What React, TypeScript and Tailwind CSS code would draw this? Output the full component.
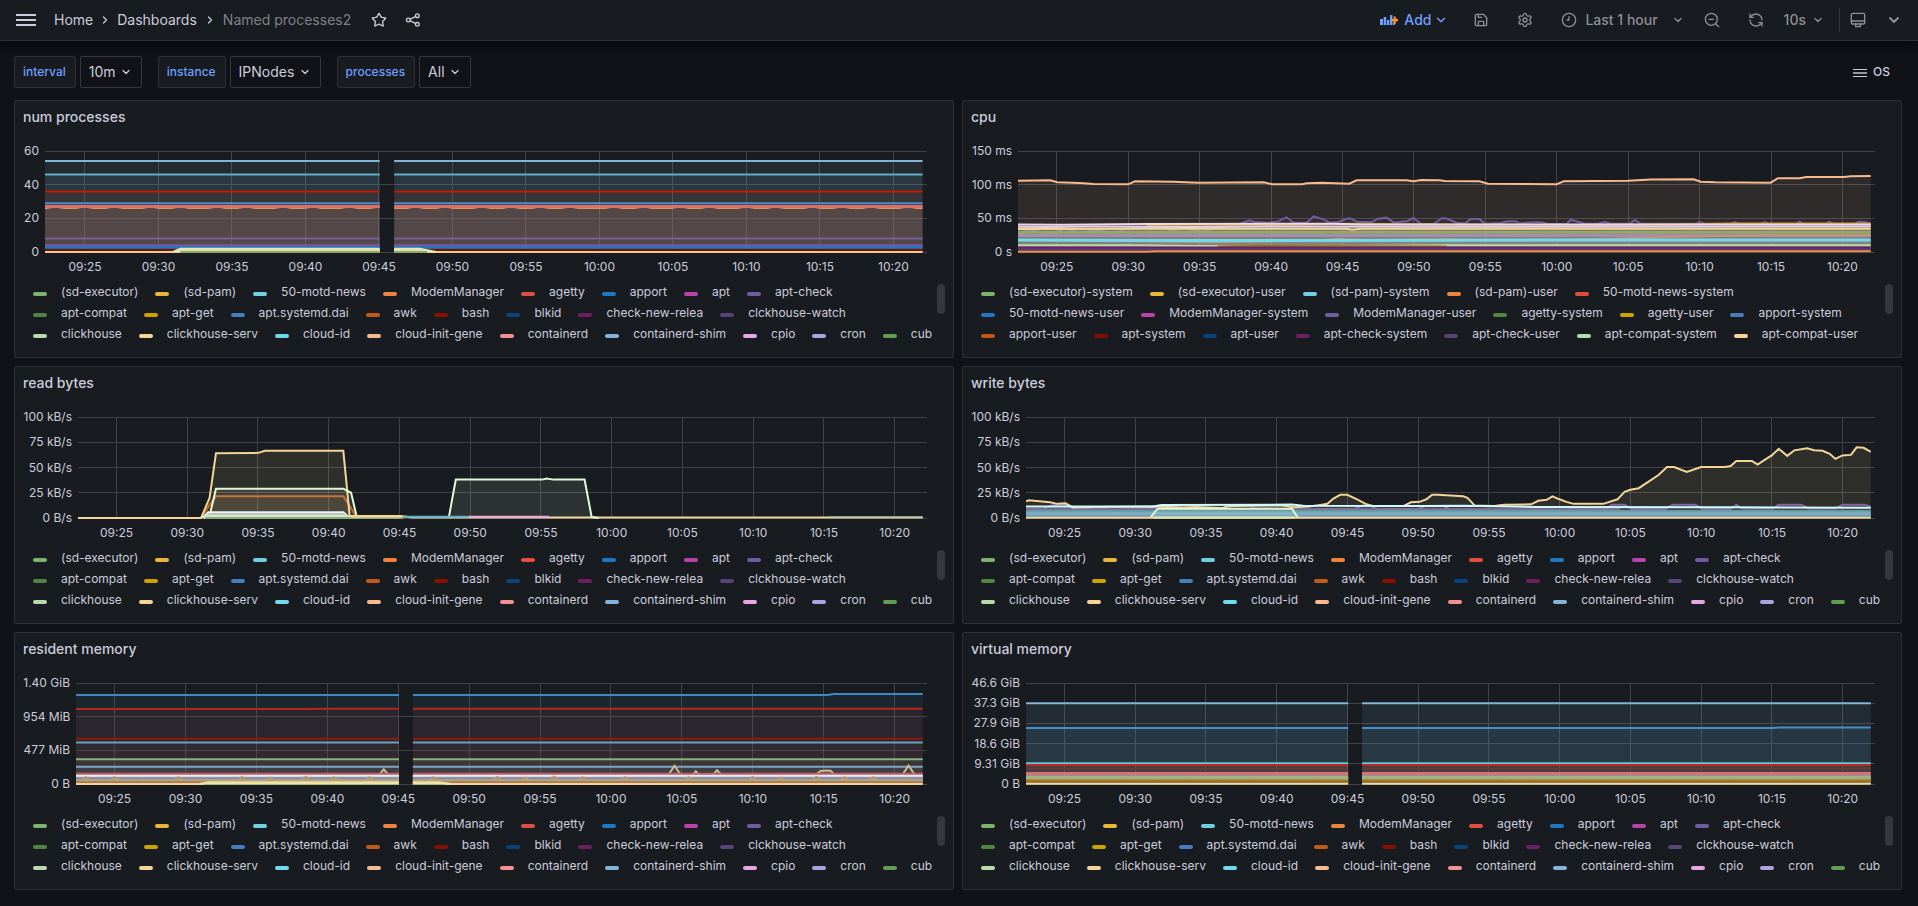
import React, { useId } from 'react';
import { ChevronDown, ChevronRight, RefreshCcw, Settings, Star } from 'lucide-react';

type Point = [number, number];

interface Series {
  color: string;
  points: Point[];
  fill?: number;
  width?: number;
}

interface PanelProps {
  title: string;
  axis: string[];
  axisWidth: string;
  max: number;
  series: Series[];
  legend: string[];
  gap?: boolean;
}

const palette = [
  '#7eb26d', '#eab839', '#6ed0e0', '#ef843c', '#e24d42', '#1f78c1', '#ba43a9', '#705da0',
  '#508642', '#cca300', '#447ebc', '#c15c17', '#890f02', '#0a437c', '#6d1f62', '#584477',
  '#b7dbab', '#f4d598', '#70dbed', '#f9ba8f', '#f29191', '#82b5d8', '#e5a8e2', '#aea2e0', '#629e51',
];

const processNames = [
  '(sd-executor)', '(sd-pam)', '50-motd-news', 'ModemManager', 'agetty', 'apport', 'apt', 'apt-check',
  'apt-compat', 'apt-get', 'apt.systemd.dai', 'awk', 'bash', 'blkid', 'check-new-relea', 'clckhouse-watch',
  'clickhouse', 'clickhouse-serv', 'cloud-id', 'cloud-init-gene', 'containerd', 'containerd-shim', 'cpio', 'cron', 'cub',
];

const cpuNames = [
  '(sd-executor)-system', '(sd-executor)-user', '(sd-pam)-system', '(sd-pam)-user', '50-motd-news-system',
  '50-motd-news-user', 'ModemManager-system', 'ModemManager-user', 'agetty-system', 'agetty-user', 'apport-system',
  'apport-user', 'apt-system', 'apt-user', 'apt-check-system', 'apt-check-user', 'apt-compat-system', 'apt-compat-user',
];

// x values are minutes from the left edge, the window is one hour
const SPAN = 60;
const LAST = 59.7;
const GAP_START = 22.77;
const GAP_END = 23.75;
const ticks = [
  '09:25', '09:30', '09:35', '09:40', '09:45', '09:50', '09:55', '10:00', '10:05', '10:10', '10:15', '10:20',
].map((label, i) => ({ label, x: `${((2.72 + i * 5) / SPAN) * 100}%` }));

const bumpTimes = [
  0.7, 2.7, 4.7, 7.2, 9.2, 11.7, 13.7, 16.2, 18.2, 20.7, 22.7, 25.2, 27.2, 29.7,
  31.7, 33.7, 35.7, 38.7, 40.7, 43.2, 45.2, 47.7, 49.7, 52.2, 54.2, 56.2, 58.7,
];

const flat = (color: string, value: number, fill = 0.1, width = 2, from = 0, to = LAST): Series => ({
  color,
  fill,
  width,
  points: [[from, value], [to, value]],
});

const bumps = (base: number, heights: number[], half: number): Point[] => [
  [0, base],
  ...bumpTimes.flatMap((t, i): Point[] => [
    [t - half, base],
    [t, heights[i % heights.length]],
    [t + half, base],
  ]),
  [LAST, base],
];

const numSeries: Series[] = [
  flat('#82b5d8', 54),
  flat('#5fb0c6', 46),
  flat('#bf1b00', 36, 0.1),
  flat('#4a8fce', 29, 0.08),
  { color: '#e0955c', fill: 0.12, points: bumps(26.1, [27], 0.6) },
  flat('#dd6f66', 27, 0.06, 3),
  flat('#7d5f94', 8, 0.06),
  flat('#a3478c', 4, 0.04),
  flat('#1f78c1', 3, 0.08, 3),
  flat('#6b150a', 1.2, 0.3, 2),
  flat('#f4c890', 0, 0, 2),
  { color: '#e4e9c0', fill: 0.9, points: [[8.7, 0], [9.2, 2], [25.5, 2], [26.6, 0]] },
  flat('#efdca0', 0.9, 0.6, 2, 9.2, 25.8),
  flat('#8aa872', 0, 0, 2, 9.2, 26),
];

const cpuSeries: Series[] = [
  {
    color: '#f9ba8f',
    points: [
      [0, 106], [2.25, 106.5], [2.75, 103.5], [4.35, 102.5], [5.3, 101], [7.7, 100.5], [8.2, 105], [10.9, 104.5],
      [12.6, 103], [17.2, 103.5], [17.8, 100.5], [19.9, 100.5], [20.2, 102], [21.3, 103], [23.2, 101.5], [23.7, 106.5],
      [27.2, 106.5], [27.7, 105], [28.2, 107], [29.5, 106.5], [29.9, 105.5], [32.3, 105], [32.9, 101.5], [35.5, 101],
      [37.7, 100.5], [38.2, 105], [42.7, 106], [44.3, 107.5], [47.3, 108], [47.8, 104.5], [48.8, 103.5], [52.7, 103],
      [53.2, 109.5], [54.7, 109.5], [55.2, 111.5], [57.8, 111.5], [58.3, 112.5], [LAST, 113],
    ],
  },
  {
    color: '#705da0',
    points: [
      [0, 24], [0.5, 31], [1.4, 31], [1.7, 27], [2.7, 28], [3.2, 36], [4.3, 29], [5.7, 33], [6.3, 29], [7, 30],
      [7.7, 36], [10.3, 36], [10.8, 31], [11.4, 36], [13, 30], [13.8, 36], [15.3, 40], [16.2, 47], [16.6, 44.5],
      [17.6, 43.5], [18.2, 45.5], [18.8, 51.5], [19.3, 43.5], [20.2, 43.5], [20.7, 53], [21.4, 48.5], [21.8, 43.5],
      [22.4, 44.5], [23.2, 50.5], [23.8, 44.5], [24.8, 44.5], [25.2, 49.5], [25.8, 51], [26.3, 44], [27.2, 45.5],
      [27.7, 50.5], [28.2, 42], [29.1, 41.5], [29.7, 50.5], [30.1, 49], [30.7, 43.5], [31.3, 42.5], [31.7, 49],
      [32.3, 49], [32.7, 42], [33.8, 43], [34.3, 45.5], [34.8, 45.5], [35.1, 42.5], [36.2, 44], [36.6, 44],
      [37.1, 41.5], [38.4, 41.5], [38.7, 48], [39.2, 45], [39.7, 42], [40.6, 42], [41.1, 44.5], [41.5, 42],
      [42.8, 42], [43.2, 47.5], [43.6, 42], [47.5, 42], [47.7, 44.5], [48.1, 42], [50, 42], [50.2, 44.5],
      [50.5, 42], [52, 42], [52.3, 44.5], [52.5, 42], [54.5, 42], [54.7, 45], [55, 42], [56.6, 42], [56.8, 45],
      [57.1, 42], [58.6, 42], [58.8, 44.5], [59.3, 44.5], [LAST, 42],
    ],
  },
  { color: '#b8901c', fill: 0.1, points: [[9, 40], [13, 40.5], [17, 40], [23, 42], [30, 41], [38, 40], [46, 41], [50, 42.5], [LAST, 42.5]] },
  { color: '#f6d6e4', fill: 0.14, width: 2, points: [[0, 40.8], [3, 40.4], [9, 41.5], [22, 42], [24, 40.8], [LAST, 40.8]] },
  { color: '#dfd3ee', fill: 0.16, width: 2, points: [[0, 37.6], [2, 37], [5, 37.8], [12, 37], [20, 38], [30, 37.4], [LAST, 37.8]] },
  { color: '#f4d598', fill: 0.12, points: [[0, 34], [9, 34.5], [23, 34.5], [23.4, 33], [24, 34.5], [LAST, 34.5]] },
  flat('#94a86b', 29.5, 0.14, 3),
  flat('#a58db0', 24.5, 0.12, 3),
  { color: '#c79274', fill: 0.05, points: [[0, 18], [14, 15], [21, 17], [22.5, 19.5], [24, 18], [30, 19], [34, 17], [40, 19], [47, 23], [53, 25], [LAST, 25]] },
  { color: '#70dbed', fill: 0.1, width: 3, points: [[0, 17.8], [12, 17], [30, 17.6], [LAST, 17.8]] },
  { color: '#b7dbab', fill: 0.08, width: 2, points: [[0, 10], [8, 10], [12, 9], [16, 8.6], [24, 9], [30, 10], [LAST, 10]] },
  { color: '#94760d', fill: 0, width: 2, points: [[14, 8], [17, 9], [23, 8.6], [30, 8]] },
  flat('#6d1f62', 6, 0.5, 3),
  flat('#573d75', 3.2, 0.3, 3),
  { color: '#ef8a45', fill: 0.3, width: 2, points: [[0, 0.4], [9, 0.4], [9.6, 1.2], [LAST, 1.2]] },
];

const readSeries: Series[] = [
  { color: '#c15c17', points: [[8.7, 0], [9.3, 13], [9.75, 21.5], [18.75, 21.5], [19.3, 10], [19.7, 0]], fill: 0.1 },
  {
    color: '#f4d598',
    points: [
      [0, 0], [8.7, 0], [9.3, 20], [9.75, 64], [12.75, 64.5], [13.2, 66.5], [18.75, 66.5], [19.2, 2],
      [22.8, 2], [23.6, 0.4], [LAST, 0.4],
    ],
  },
  { color: '#e0f9d7', points: [[8.9, 0], [9.35, 5], [9.75, 29], [18.75, 29], [19.3, 25], [19.7, 1], [22, 0]] },
  { color: '#e0f9d7', points: [[26.2, 0], [26.7, 38], [32.8, 38], [33.1, 39], [33.6, 38], [35.8, 38], [36.3, 1], [36.8, 0]] },
  { color: '#e2f7f6', fill: 0.4, width: 2, points: [[8.8, 0], [9.2, 5.8], [18.75, 5.8], [19.2, 0]] },
  { color: '#d3c2ba', fill: 0.3, width: 2, points: [[8.9, 0], [9.3, 3.8], [18.8, 3.8], [19.1, 0]] },
  { color: '#cdeed0', fill: 0.5, width: 2, points: [[8.9, 0], [9.3, 2], [18.8, 2], [19.1, 0]] },
  flat('#88aa72', 0, 0, 2, 9, 23),
  flat('#f4d598', 1.4, 0.3, 2, 19.3, 22.8),
  flat('#58b4cf', 1.2, 0, 2, 23, 27.6),
  flat('#e5a8e2', 1.2, 0, 2, 27.6, 33.3),
  flat('#9ac6c0', 1, 0, 1, 53, LAST),
];

const writeSeries: Series[] = [
  flat('#5d6f80', 7, 0.2),
  {
    color: '#705da0',
    fill: 0.2,
    points: [
      [0, 9], [1.2, 9], [1.8, 12.5], [2.8, 13.5], [3.3, 9.5], [5.7, 9], [6.3, 4], [6.8, 8.5], [8.7, 9], [9.4, 12.5],
      [10.9, 11.5], [11.2, 9], [14, 9.5], [14.8, 12.5], [15.8, 12.5], [16.2, 9.5], [19, 9], [23.2, 9], [23.8, 12.5],
      [24.3, 12], [24.8, 9], [27.8, 9], [28.2, 12], [29.5, 12], [30, 8.5], [37.2, 8.5], [37.8, 4], [38.3, 8.5],
      [41, 9], [41.4, 13], [42.3, 13], [42.8, 9], [45.2, 9], [45.7, 13], [47.3, 13], [47.8, 9], [49.8, 9],
      [50.2, 13], [50.6, 9.5], [52.8, 9.5], [53.2, 13], [54.8, 13], [55.3, 9.5], [57.2, 9.5], [57.7, 13.2],
      [59.3, 13.2], [LAST, 11],
    ],
  },
  flat('#6a5d98', 8.6, 0.1, 2, 0, 42),
  {
    color: '#f4d598',
    points: [
      [0, 16.5], [0.2, 17.5], [1.7, 15.5], [2.2, 14], [2.8, 14.5], [3.3, 10.5], [5, 11], [9, 11.5], [10.9, 10.3],
      [12, 11], [13.9, 10], [14.3, 12], [18, 12.5], [18.9, 10.6], [20, 11.5], [20.8, 13], [21.3, 14], [21.7, 19],
      [22.2, 23], [22.7, 23], [23.4, 18.5], [24, 14], [24.5, 12], [26.7, 12], [27.2, 15.5], [27.8, 16], [28.3, 18.5],
      [28.7, 23], [29.1, 23], [30.3, 22], [30.9, 21.5], [31.2, 20], [31.7, 12.5], [33.1, 12], [33.8, 13],
      [35.7, 13.5], [36.2, 17], [36.8, 18], [37.2, 21.5], [37.7, 18.5], [38.2, 16], [38.7, 14], [40.8, 14],
      [41.8, 18.5], [42.3, 26], [42.7, 28], [43.3, 29.5], [44.7, 42.5], [45.3, 50.5], [45.8, 50.5], [46.7, 45.5],
      [47.7, 50.5], [49.4, 50.5], [49.8, 51.5], [50.2, 56.5], [51.3, 56.5], [51.7, 53], [52.2, 57.5], [52.7, 62],
      [53.2, 68.5], [53.8, 61.5], [54.3, 67], [55.2, 69], [55.7, 67], [56.3, 66.5], [56.8, 63.5], [57.2, 58.5],
      [57.7, 62], [58.3, 62.5], [58.7, 70], [59.2, 69.5], [LAST, 65.5],
    ],
  },
  { color: '#cffaff', fill: 0.06, points: [[0, 11.3], [9, 11.3], [9.6, 12.8], [18.8, 13.3], [19.6, 12.2], [28, 11.8], [31, 12.2], [36, 11], [50, 10.6], [LAST, 10.2]] },
  flat('#61a3ac', 6.6, 0.2, 2),
  flat('#8bb284', 5.6, 0.1, 1),
  flat('#7db0d2', 4, 0.5, 3),
  flat('#6f9fc0', 2.4, 0.4, 2),
  { color: '#dff6d5', fill: 0.08, points: [[8.8, 0.5], [9.3, 9.2], [18.8, 9.2], [19.2, 0.5]] },
  flat('#f4d598', 0.2, 0, 2),
  flat('#dfe8b0', 0.6, 0, 2, 9, 19),
];

const residentSeries: Series[] = [
  { color: '#3f87c8', fill: 0.1, points: [[0, 1261], [53, 1261], [53.4, 1274], [LAST, 1274]] },
  { color: '#b7261a', fill: 0.1, points: [[0, 1061], [16, 1061], [18, 1066], [LAST, 1066]] },
  flat('#8d1a14', 640, 0.06),
  flat('#65a4bf', 588, 0.04),
  flat('#87b57c', 350, 0.1),
  flat('#82a5c5', 245, 0.08, 2),
  {
    color: '#c9bd92',
    fill: 0.05,
    points: [
      [0, 110], [21.3, 110], [21.7, 208], [22.1, 110], [41.7, 110], [42.2, 258], [42.7, 110], [43.4, 110], [43.7, 180],
      [44, 110], [44.8, 110], [45.2, 195], [45.6, 110], [52, 110], [52.5, 185], [52.9, 192], [53.2, 188], [53.6, 110],
      [58.2, 110], [58.7, 262], [59.2, 110], [LAST, 110],
    ],
  },
  flat('#cb5d66', 146, 0.2, 2),
  flat('#8795b8', 100, 0.2, 3),
  flat('#e9eff6', 118, 0.1, 2),
  flat('#8f80a0', 74, 0.2, 2),
  { color: '#c98e6e', fill: 0.1, points: bumps(46, [96, 96, 68, 96, 68, 100, 90, 104], 0.4) },
  flat('#a5a983', 50, 0.3, 3),
  flat('#b5744e', 24, 0.3, 2),
  flat('#f4d598', 0, 0, 2),
  { color: '#eee2a4', fill: 0.9, points: [[8.7, 0], [9.3, 24], [25.6, 24], [26.5, 0]] },
  flat('#a8b37c', -8, 0, 1, 9, 26),
];

const virtualSeries: Series[] = [
  flat('#82b5d8', 37.3, 0.11),
  { color: '#478fca', fill: 0.11, points: [[0, 25.8], [52.7, 25.8], [53.3, 26.1], [LAST, 26.1]] },
  flat('#65c5db', 9.6, 0.08, 2),
  flat('#bf2a1a', 8.8, 0.15, 2),
  flat('#71363a', 7.2, 0.1, 2),
  flat('#d9707a', 4.8, 0.25, 3),
  flat('#9db38a', 3.3, 0.6, 3),
  { color: '#cf8f62', fill: 0, points: bumps(1.6, [2.5], 0.4) },
  flat('#a0b184', 2.5, 0.1, 1),
  flat('#9c7b0c', 1.5, 0.4, 2),
  flat('#7c4a50', 0.8, 0.2, 1),
  flat('#f4dc9e', 0.1, 0.4, 2),
];

const toPath = (points: Point[], max: number) =>
  points.map(([x, y], i) => `${i ? 'L' : 'M'}${x.toFixed(2)} ${(max - y).toFixed(2)}`).join('');

const toArea = (points: Point[], max: number) =>
  `${toPath(points, max)}L${points[points.length - 1][0]} ${max}L${points[0][0]} ${max}Z`;

const Chart: React.FC<Omit<PanelProps, 'legend'>> = ({ title, axis, axisWidth, max, series, gap }) => {
  const clipId = useId();

  return (
    <div className="flex pt-[18px] pl-2 pr-[26px] text-xs text-[#ccccdc]">
      <div className={`${axisWidth} -my-2 flex h-[117px] shrink-0 flex-col justify-between whitespace-nowrap pr-1.5 text-right leading-4`}>
        {axis.map((label) => (
          <span key={label}>{label}</span>
        ))}
      </div>
      <div className="min-w-0 flex-1">
        <svg className="block h-[101px] w-full overflow-visible" role="img" aria-label={title}>
          <g stroke="#404246" shapeRendering="crispEdges">
            {axis.map((label, i) => {
              const y = `${(i / (axis.length - 1)) * 100}%`;
              return <line key={label} x1="0" x2="100%" y1={y} y2={y} />;
            })}
            {ticks.map((tick) => (
              <line key={tick.label} x1={tick.x} x2={tick.x} y1="0" y2="100%" />
            ))}
          </g>
          <svg width="100%" height="100%" viewBox={`0 0 ${SPAN} ${max}`} preserveAspectRatio="none" className="overflow-visible">
            <clipPath id={clipId}>
              <rect x="0" y={-max} width={gap ? GAP_START : SPAN} height={max * 3} />
              {gap && <rect x={GAP_END} y={-max} width={SPAN - GAP_END} height={max * 3} />}
            </clipPath>
            <g clipPath={`url(#${clipId})`}>
              {series.map((s, i) => (
                <g key={i}>
                  <path d={toArea(s.points, max)} fill={s.color} fillOpacity={s.fill ?? 0.1} />
                  <path
                    d={toPath(s.points, max)}
                    fill="none"
                    stroke={s.color}
                    strokeWidth={s.width ?? 2}
                    vectorEffect="non-scaling-stroke"
                  />
                </g>
              ))}
            </g>
          </svg>
        </svg>
        <svg className="mt-1 block h-5 w-full overflow-visible" aria-hidden="true">
          {ticks.map((tick) => (
            <text key={tick.label} x={tick.x} y="15" textAnchor="middle" fill="#ccccdc">
              {tick.label}
            </text>
          ))}
        </svg>
      </div>
    </div>
  );
};

const Panel: React.FC<PanelProps> = ({ title, legend, ...chart }) => (
  <section className="rounded-xs border border-[#2e3036] bg-[#181b1f] pb-3">
    <h2 className="flex h-8 items-center px-2 text-sm font-medium text-[#ccccdc]">{title}</h2>
    <Chart title={title} {...chart} />
    <div className="mt-[5px] flex h-16 justify-between overflow-hidden pl-[18px] pr-2">
      <ul className="flex h-[63px] flex-wrap content-start gap-x-[17px] overflow-hidden">
        {legend.map((name, i) => (
          <li key={name} className="h-[21px]">
            <button type="button" className="flex h-[21px] items-center gap-3.5 whitespace-nowrap text-xs text-[#ccccdc]">
              <span className="mt-1 h-1 w-3.5 rounded-full" style={{ backgroundColor: palette[i] }} />
              {name}
            </button>
          </li>
        ))}
      </ul>
      <div className="mt-[3px] h-[30px] w-2 shrink-0 rounded-full bg-[#35373b]" />
    </div>
  </section>
);

interface IconProps {
  className?: string;
  children: React.ReactNode;
}

const Icon: React.FC<IconProps> = ({ className = 'size-4', children }) => (
  <svg
    viewBox="0 0 24 24"
    className={className}
    fill="none"
    stroke="currentColor"
    strokeWidth="2"
    strokeLinecap="round"
    strokeLinejoin="round"
    aria-hidden="true"
  >
    {children}
  </svg>
);

const MenuIcon = () => (
  <svg viewBox="0 0 20 12" className="h-3 w-5" fill="currentColor" aria-hidden="true">
    <path d="M0 0h20v2H0zM0 5h20v2H0zM0 10h20v2H0z" />
  </svg>
);

const AddPanelIcon = () => (
  <svg viewBox="0 0 18 12" className="h-3 w-[18px]" fill="currentColor" aria-hidden="true">
    <path d="M0 5h3v6H0zM3.7 3h2.6v8H3.7zM7 6h2.4v5H7zM10 1h2.4v10H10zM13 8.5h1.8V11H13z" />
    <path d="M13.6 2.5h2.2v2.4H18v2.4h-2.2v2.4h-2.2V7.3h-2.2V4.9h2.2z" fill="#ff9830" />
  </svg>
);

interface VariableProps {
  name: string;
  value: string;
}

const Variable: React.FC<VariableProps> = ({ name, value }) => (
  <div className="flex gap-1">
    <label
      htmlFor={`var-${name}`}
      className="flex h-8 items-center rounded-xs border border-[#2e3036] bg-[#181b1f] pl-2 pr-[9px] text-xs font-medium text-[#6e9fff]"
    >
      {name}
    </label>
    <div className="relative">
      <select
        id={`var-${name}`}
        className="h-8 appearance-none rounded-xs border border-[#36373e] bg-[#111217] pl-2 pr-[25px] text-sm text-[#ccccdc]"
      >
        <option>{value}</option>
      </select>
      <ChevronDown className="pointer-events-none absolute top-2.5 right-2.5 size-3 text-[#ccccdc]" strokeWidth={2.5} />
    </div>
  </div>
);

const TopBar = () => (
  <header className="relative flex h-[41px] items-center justify-between border-b border-[#2e3036] bg-[#181b1f] px-4 text-sm text-[#ccccdc] shadow-[0_4px_8px_rgba(1,4,9,0.75)]">
    <div className="flex items-center">
      <button type="button" aria-label="Toggle menu">
        <MenuIcon />
      </button>
      <nav className="ml-[18px] flex items-center">
        <a href="#home">Home</a>
        <ChevronRight className="mx-1.5 size-3" strokeWidth={2.5} />
        <a href="#dashboards">Dashboards</a>
        <ChevronRight className="mx-[7px] size-3" strokeWidth={2.5} />
        <span className="text-[#7f8089]">Named processes2</span>
      </nav>
      <button type="button" className="ml-5" aria-label="Mark as favorite">
        <Star className="size-4" />
      </button>
      <button type="button" className="ml-[18px]" aria-label="Share dashboard">
        <Icon>
          <circle cx="18.5" cy="5.5" r="2.8" />
          <circle cx="5" cy="12" r="2.8" />
          <circle cx="18.5" cy="18.5" r="2.8" />
          <path d="M7.8 10.6l8-3.8M7.8 13.4l8 3.8" />
        </Icon>
      </button>
    </div>

    <div className="flex items-center text-[#8e8f99]">
      <button type="button" className="flex items-center text-[#6e9fff]">
        <AddPanelIcon />
        <span className="ml-1.5 font-medium">Add</span>
        <ChevronDown className="ml-[3px] size-3.5" strokeWidth={2.5} />
      </button>
      <button type="button" className="ml-[25px]" aria-label="Save dashboard">
        <Icon>
          <path d="M5 3.5h10.5l5 5v11a1 1 0 0 1-1 1H5A1.5 1.5 0 0 1 3.5 19V5A1.5 1.5 0 0 1 5 3.5z" />
          <path d="M8 4v4h5M8 20v-5a1 1 0 0 1 1-1h6a1 1 0 0 1 1 1v5" />
        </Icon>
      </button>
      <button type="button" className="ml-7" aria-label="Dashboard settings">
        <Settings className="size-4" />
      </button>
      <button type="button" className="ml-7 flex items-center font-medium">
        <Icon>
          <circle cx="12" cy="12" r="10" />
          <path d="M12 7v5H9" />
        </Icon>
        <span className="ml-2">Last 1 hour</span>
        <ChevronDown className="ml-3.5 size-3" strokeWidth={2.5} />
      </button>
      <button type="button" className="ml-5" aria-label="Zoom out time range">
        <Icon>
          <circle cx="11" cy="11" r="9" />
          <path d="M7.5 11h7M17.5 17.5L22 22" />
        </Icon>
      </button>
      <button type="button" className="ml-7" aria-label="Refresh dashboard">
        <RefreshCcw className="size-4" />
      </button>
      <button type="button" className="ml-5 flex items-center font-medium">
        10s
        <ChevronDown className="ml-1.5 size-3" strokeWidth={2.5} />
      </button>
      <span className="ml-[15px] h-6 w-px bg-[#36373e]" />
      <button type="button" className="ml-2.5" aria-label="Cycle view mode">
        <Icon>
          <rect x="2" y="2" width="20" height="16" rx="2" />
          <path d="M2 13.5h20M8.5 18v4h7v-4" />
        </Icon>
      </button>
      <button type="button" className="ml-5" aria-label="Toggle top search bar">
        <ChevronDown className="size-4" strokeWidth={3} />
      </button>
    </div>
  </header>
);

const App: React.FC = () => (
  <div className="min-h-screen bg-[#111217] font-['Inter',sans-serif]">
    <TopBar />
    <main className="pt-[15px] pr-4 pb-4 pl-3.5">
      <div className="mb-3 flex items-center justify-between">
        <div className="flex gap-4">
          <Variable name="interval" value="10m" />
          <Variable name="instance" value="IPNodes" />
          <Variable name="processes" value="All" />
        </div>
        <a href="#os" className="flex items-center gap-1.5 pr-3 text-xs font-medium text-[#ccccdc]">
          <svg viewBox="0 0 14 8" className="mt-px h-2 w-3.5" fill="currentColor" aria-hidden="true">
            <path d="M0 0h14v1H0zM0 7h14v1H0z" />
            <path d="M0 3h14v2H0z" opacity="0.7" />
          </svg>
          OS
        </a>
      </div>

      <div className="grid grid-cols-2 gap-2">
        <Panel
          title="num processes"
          axis={['60', '40', '20', '0']}
          axisWidth="w-[22px]"
          max={60}
          series={numSeries}
          legend={processNames}
          gap
        />
        <Panel
          title="cpu"
          axis={['150 ms', '100 ms', '50 ms', '0 s']}
          axisWidth="w-[47px]"
          max={150}
          series={cpuSeries}
          legend={cpuNames}
        />
        <Panel
          title="read bytes"
          axis={['100 kB/s', '75 kB/s', '50 kB/s', '25 kB/s', '0 B/s']}
          axisWidth="w-[55px]"
          max={100}
          series={readSeries}
          legend={processNames}
        />
        <Panel
          title="write bytes"
          axis={['100 kB/s', '75 kB/s', '50 kB/s', '25 kB/s', '0 B/s']}
          axisWidth="w-[55px]"
          max={100}
          series={writeSeries}
          legend={processNames}
        />
        <Panel
          title="resident memory"
          axis={['1.40 GiB', '954 MiB', '477 MiB', '0 B']}
          axisWidth="w-[53px]"
          max={1431}
          series={residentSeries}
          legend={processNames}
          gap
        />
        <Panel
          title="virtual memory"
          axis={['46.6 GiB', '37.3 GiB', '27.9 GiB', '18.6 GiB', '9.31 GiB', '0 B']}
          axisWidth="w-[55px]"
          max={46.6}
          series={virtualSeries}
          legend={processNames}
          gap
        />
      </div>
    </main>
  </div>
);

export default App;
